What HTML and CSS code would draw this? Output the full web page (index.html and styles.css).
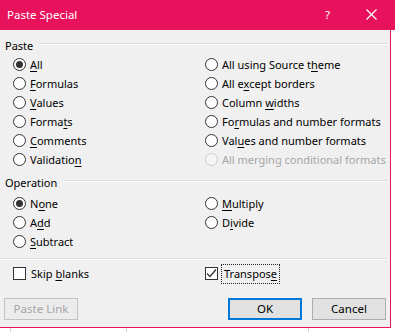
FILE: index.html
```html
<!DOCTYPE html>
<html>
<head>
<meta charset="utf-8">
<link rel="stylesheet" href="styles.css">
</head>
<body>
<div class="dialog">
  <div class="titlebar">
    <span class="title">Paste Special</span>
    <span class="help">?</span>
    <svg class="close" width="11" height="11" viewBox="0 0 11 11"><path d="M0.5 0.5 L10.5 10.5 M10.5 0.5 L0.5 10.5" stroke="#fff" stroke-width="1.2"/></svg>
  </div>
  <div class="content">
    <div class="group-head"><span>Paste</span><div class="rule"></div></div>
    <div class="options paste-opts">
      <label class="opt"><span class="radio on"></span><span><u>A</u>ll</span></label>
      <label class="opt"><span class="radio"></span><span>All using Source t<u>h</u>eme</span></label>
      <label class="opt"><span class="radio"></span><span><u>F</u>ormulas</span></label>
      <label class="opt"><span class="radio"></span><span>All e<u>x</u>cept borders</span></label>
      <label class="opt"><span class="radio"></span><span><u>V</u>alues</span></label>
      <label class="opt"><span class="radio"></span><span>Column <u>w</u>idths</span></label>
      <label class="opt"><span class="radio"></span><span>Forma<u>t</u>s</span></label>
      <label class="opt"><span class="radio"></span><span>Fo<u>r</u>mulas and number formats</span></label>
      <label class="opt"><span class="radio"></span><span><u>C</u>omments</span></label>
      <label class="opt"><span class="radio"></span><span>Val<u>u</u>es and number formats</span></label>
      <label class="opt"><span class="radio"></span><span>Validatio<u>n</u></span></label>
      <label class="opt disabled"><span class="radio"></span><span>All merging conditional formats</span></label>
    </div>
    <div class="group-head op-head"><span>Operation</span><div class="rule"></div></div>
    <div class="options op-opts">
      <label class="opt"><span class="radio on"></span><span>N<u>o</u>ne</span></label>
      <label class="opt"><span class="radio"></span><span><u>M</u>ultiply</span></label>
      <label class="opt"><span class="radio"></span><span>A<u>d</u>d</span></label>
      <label class="opt"><span class="radio"></span><span>D<u>i</u>vide</span></label>
      <label class="opt"><span class="radio"></span><span><u>S</u>ubtract</span></label>
    </div>
    <div class="sep"></div>
    <div class="options checks">
      <label class="opt"><span class="check"></span><span>Skip <u>b</u>lanks</span></label>
      <label class="opt"><span class="check on"><svg width="11" height="11" viewBox="0 0 11 11"><path d="M1 5.5 L4 8.5 L10 1.5" fill="none" stroke="#333" stroke-width="1.3"/></svg></span><span class="focus">Transpos<u>e</u></span></label>
    </div>
    <div class="buttons">
      <button class="btn disabled">Paste Link</button>
      <div class="spacer"></div>
      <button class="btn default">OK</button>
      <button class="btn">Cancel</button>
    </div>
  </div>
  <div class="sheet">
    <div class="cell c1"></div>
    <div class="cell c2"></div>
    <div class="cell c3"></div>
  </div>
</div>
</body>
</html>
```
FILE: styles.css
```css
html, body {
  margin: 0;
  padding: 0;
  background: #ffffff;
}
body {
  width: 395px;
  height: 332px;
  overflow: hidden;
  font-family: "Noto Sans", "Open Sans", sans-serif;
  font-size: 11px;
  color: #000;
}
.dialog {
  width: 395px;
}
.titlebar {
  height: 30px;
  background: #e8115b;
  color: #fff;
  display: flex;
  align-items: center;
}
.title {
  margin-left: 7px;
  font-size: 11.5px;
  margin-top: -1px;
}
.help {
  margin-left: auto;
  margin-right: 36px;
  font-size: 11.5px;
  margin-top: -2px;
}
.close {
  margin-right: 18px;
  margin-top: -1px;
}
.content {
  width: 391px;
  height: 298px;
  box-sizing: border-box;
  background: #f0f0f0;
  border-right: 1px solid #e8115b;
  border-bottom: 1px solid #e8115b;
  display: flex;
  flex-direction: column;
  padding-top: 8px;
}
.group-head {
  display: flex;
  align-items: center;
  height: 16px;
  line-height: 16px;
  padding-left: 5px;
}
.group-head .rule {
  flex: 1;
  height: 0;
  border-top: 1px solid #dcdcdc;
  border-bottom: 1px solid #fff;
  margin-left: 6px;
  margin-right: 3px;
  margin-top: -4px;
}
.op-head {
  margin-top: 6px;
}
.options {
  display: grid;
  grid-template-columns: 192px 1fr;
  padding-left: 13px;
  margin-top: 1px;
}
.op-opts {
  margin-top: 3px;
}
.opt {
  display: flex;
  align-items: center;
  height: 19px;
  line-height: 16px;
  white-space: nowrap;
}
.opt u {
  text-decoration-thickness: 1px;
  text-underline-offset: 2px;
}
.radio {
  width: 11px;
  height: 11px;
  border: 1px solid #333;
  border-radius: 50%;
  background: #fff;
  margin-right: 4px;
  flex: none;
  display: flex;
  align-items: center;
  justify-content: center;
}
.radio.on::after {
  content: "";
  width: 7px;
  height: 7px;
  border-radius: 50%;
  background: #333;
}
.disabled {
  color: #a6a6a6;
}
.disabled .radio {
  border-color: #cccccc;
  background: #f5f5f5;
}
.sep {
  margin-top: 7px;
  margin-right: 3px;
  border-top: 1px solid #dcdcdc;
  border-bottom: 1px solid #fff;
}
.checks {
  margin-top: 4px;
}
.check {
  width: 11px;
  height: 11px;
  border: 1px solid #333;
  background: #fff;
  margin-right: 5px;
  flex: none;
  display: flex;
  align-items: center;
  justify-content: center;
}
.focus {
  outline: 1px dotted #222;
  outline-offset: 1px;
  padding: 0 1px;
}
.buttons {
  display: flex;
  padding: 0 4px;
  margin-top: 15px;
  gap: 10px;
}
.spacer {
  flex: 1;
}
.btn {
  width: 74px;
  height: 22px;
  box-sizing: border-box;
  background: #e1e1e1;
  border: 1px solid #adadad;
  font-family: "Noto Sans", "Open Sans", sans-serif;
  font-size: 11.5px;
  color: #000;
  padding: 0;
  line-height: 18px;
}
.btn.disabled {
  background: #ececec;
  border-color: #c2c2c2;
  color: #a6a6a6;
}
.btn.default {
  border: 2px solid #0078d7;
}
.sheet {
  position: relative;
  height: 4px;
  background: #fff;
}
.cell {
  position: absolute;
  top: 0;
  bottom: 0;
  width: 1px;
  background: #d4d4d4;
}
.c1 { left: 10px; }
.c2 { left: 126px; }
.c3 { left: 308px; }
```
